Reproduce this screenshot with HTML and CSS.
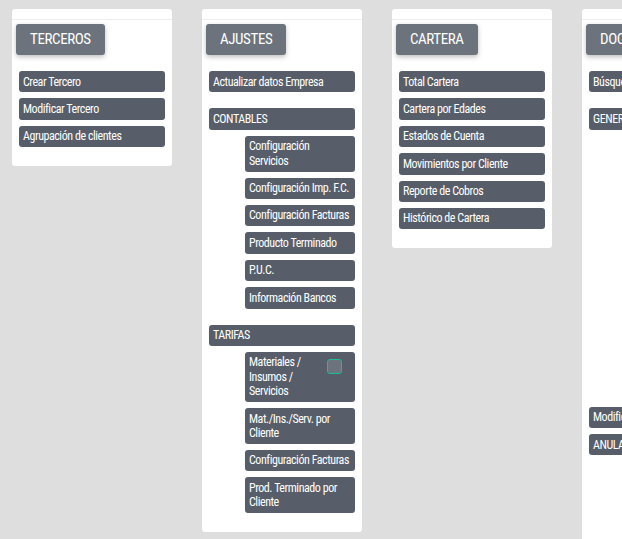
FILE: index.html
```html
<!DOCTYPE html>
<html lang="es">
<head>
<meta charset="utf-8">
<title>Menú</title>
<link rel="stylesheet" href="styles.css">
</head>
<body>
<div class="board">
  <section class="card">
    <div class="card-top"></div>
    <h2 class="card-title">TERCEROS</h2>
    <ul class="menu">
      <li class="item">Crear Tercero</li>
      <li class="item">Modificar Tercero</li>
      <li class="item">Agrupación de clientes</li>
    </ul>
  </section>

  <section class="card">
    <div class="card-top"></div>
    <h2 class="card-title">AJUSTES</h2>
    <ul class="menu">
      <li class="item">Actualizar datos Empresa</li>
      <li class="group">
        <div class="item">CONTABLES</div>
        <ul class="sub">
          <li class="item">Configuración<br>Servicios</li>
          <li class="item">Configuración Imp. F.C.</li>
          <li class="item">Configuración Facturas</li>
          <li class="item">Producto Terminado</li>
          <li class="item">P.U.C.</li>
          <li class="item">Información Bancos</li>
        </ul>
      </li>
      <li class="group">
        <div class="item">TARIFAS</div>
        <ul class="sub">
          <li class="item with-check"><span>Materiales / Insumos / Servicios</span><span class="check"></span></li>
          <li class="item">Mat./Ins./Serv. por Cliente</li>
          <li class="item">Configuración Facturas</li>
          <li class="item">Prod. Terminado por Cliente</li>
        </ul>
      </li>
    </ul>
  </section>

  <section class="card">
    <div class="card-top"></div>
    <h2 class="card-title">CARTERA</h2>
    <ul class="menu">
      <li class="item">Total Cartera</li>
      <li class="item">Cartera por Edades</li>
      <li class="item">Estados de Cuenta</li>
      <li class="item">Movimientos por Cliente</li>
      <li class="item">Reporte de Cobros</li>
      <li class="item">Histórico de Cartera</li>
    </ul>
  </section>

  <section class="card">
    <div class="card-top"></div>
    <h2 class="card-title">DOCUMENTOS</h2>
    <ul class="menu">
      <li class="item">Búsqueda de Documentos</li>
      <li class="group">
        <div class="item">GENERAR</div>
        <ul class="sub">
          <li class="item">Factura de Venta</li>
          <li class="item">Nota Crédito</li>
          <li class="item">Nota Débito</li>
          <li class="item">Recibo de Caja</li>
          <li class="item">Comprobante de Egreso</li>
          <li class="item">Orden de Compra</li>
          <li class="item">Remisión</li>
          <li class="item">Cotización</li>
          <li class="item">Documento Soporte</li>
        </ul>
      </li>
      <li class="item">Modificar Documentos</li>
      <li class="group group-tight">
        <div class="item">ANULAR</div>
        <ul class="sub">
          <li class="item">Factura de Venta</li>
          <li class="item">Nota Crédito</li>
          <li class="item">Nota Débito</li>
          <li class="item">Recibo de Caja</li>
          <li class="item">Comprobante de Egreso</li>
        </ul>
      </li>
    </ul>
  </section>
</div>
</body>
</html>
```
FILE: styles.css
```css
html, body {
  margin: 0;
  padding: 0;
  overflow: hidden;
  background: #dedede;
  height: 100%;
}

body {
  font-family: "Roboto Condensed", "Liberation Sans Narrow", "DejaVu Sans Condensed", Roboto, sans-serif;
  color: #fff;
}

.board {
  display: flex;
  align-items: flex-start;
  gap: 30px;
  padding: 9px 0 0 12px;
  width: max-content;
}

.card {
  flex: 0 0 160px;
  width: 160px;
  background: #fff;
  border-radius: 3px;
  padding-bottom: 19px;
}

.card-top {
  height: 10px;
  border-bottom: 1px solid #eeeeee;
}

.card-title {
  display: inline-block;
  margin: 4px 0 0 4px;
  height: 31px;
  line-height: 31px;
  padding: 0 14px;
  background: #6c737c;
  border-radius: 3px;
  box-shadow: 0 2px 5px rgba(0, 0, 0, 0.25);
  font-size: 15px;
  letter-spacing: -0.4px;
  font-weight: 400;
  color: #fff;
}

.menu, .sub {
  list-style: none;
  margin: 0;
  padding: 0;
}

.menu {
  margin: 16px 7px 0 7px;
  display: flex;
  flex-direction: column;
  gap: 6px;
}

.menu > .group,
.group + .item {
  margin-top: 10px;
}

.menu > .group-tight {
  margin-top: 0;
}

.sub {
  margin: 6px 0 0 36px;
  display: flex;
  flex-direction: column;
  gap: 6px;
}

.item {
  background: #575e69;
  border-radius: 3px;
  padding: 3.5px 4px;
  font-size: 12px;
  letter-spacing: -0.45px;
  line-height: 1.2;
  color: #fff;
}

.with-check {
  display: flex;
  justify-content: space-between;
  align-items: flex-start;
  gap: 6px;
}

.with-check span:first-child {
  max-width: 68px;
}

.check {
  flex: 0 0 auto;
  width: 13px;
  height: 13px;
  margin: 3.5px 9px 0 0;
  border: 1px solid #1abc9c;
  border-radius: 3px;
  background: #6c737c;
}
```
